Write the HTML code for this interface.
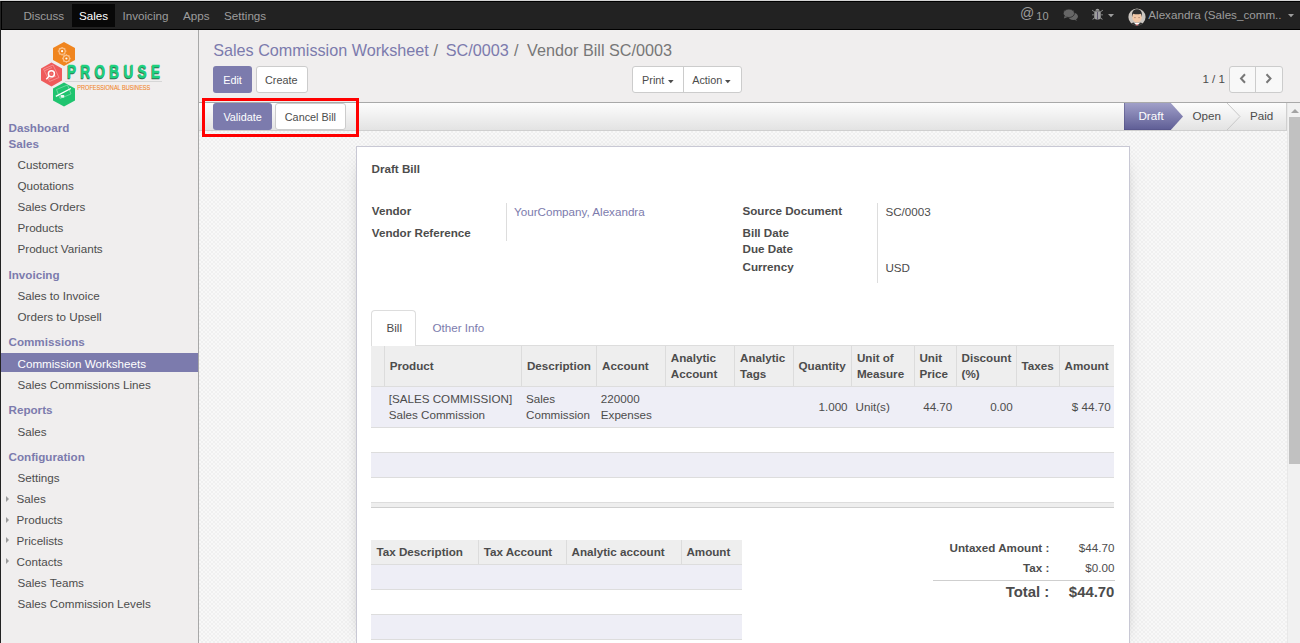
<!DOCTYPE html>
<html><head><meta charset="utf-8"><title>Vendor Bill SC/0003</title>
<style>
html,body{margin:0;padding:0;width:1300px;height:643px;overflow:hidden;background:#fff;}
body{position:relative;font-family:"Liberation Sans",sans-serif;}
.t{position:absolute;white-space:nowrap;}
.r{position:absolute;}
</style></head><body>
<div class="r" style="left:0px;top:0px;width:1300px;height:1px;background:#d4d4d4"></div>
<div class="r" style="left:0px;top:1px;width:1300px;height:29px;background:#000"></div>
<div class="r" style="left:2px;top:2px;width:1298px;height:27px;background:#222"></div>
<div class="r" style="left:0px;top:1px;width:1px;height:642px;background:#222"></div>
<div class="r" style="left:72px;top:4px;width:43px;height:23px;background:#080808"></div>
<div class="t" style="left:23.40px;top:8px;font-size:11.65px;line-height:16px;color:#9d9d9d;">Discuss</div>
<div class="t" style="left:78.90px;top:8px;font-size:11.65px;line-height:16px;color:#fff;">Sales</div>
<div class="t" style="left:122.50px;top:8px;font-size:11.65px;line-height:16px;color:#9d9d9d;">Invoicing</div>
<div class="t" style="left:183.00px;top:8px;font-size:11.65px;line-height:16px;color:#9d9d9d;">Apps</div>
<div class="t" style="left:224.10px;top:8px;font-size:11.65px;line-height:16px;color:#9d9d9d;">Settings</div>
<div class="t" style="left:1020.00px;top:4px;font-size:14px;line-height:18px;color:#9d9d9d;">@</div>
<div class="t" style="left:1036.30px;top:9px;font-size:11px;line-height:14px;color:#9d9d9d;">10</div>
<svg class="r" style="left:1063px;top:8.6px" width="16" height="13" viewBox="0 0 16 13"><ellipse cx="10.2" cy="7.4" rx="4.7" ry="3.6" fill="#666"/><path d="M12.6 10l1.7 1.8-3.4-1z" fill="#666"/><ellipse cx="5.9" cy="4.3" rx="5.6" ry="4.2" fill="#666" stroke="#222" stroke-width=".7"/><path d="M1.6 6.9L.9 9.5l3.6-1.4z" fill="#666"/></svg>
<svg class="r" style="left:1092px;top:8.4px" width="11" height="12" viewBox="0 0 11 12"><g fill="#9d9d9d"><path d="M3.4 2.8C3.6 1.4 4.4.7 5.5.7s1.9.7 2.1 2.1z"/><path d="M2.3 3.2h6.4l.1 6c0 1.2-.9 2.2-2.2 2.2H4.4c-1.3 0-2.2-1-2.2-2.2z"/><path d="M.3 1.8l2.3 1.7-.4.6L0 2.4zM10.7 1.8L8.4 3.5l.4.6L11 2.4zM0 6.4h2.3v.9H0zM8.7 6.4H11v.9H8.7zM.3 11.2l2-1.6.5.6-2 1.6zM10.7 11.2l-2-1.6-.5.6 2 1.6z"/></g><rect x="5.1" y="4" width=".8" height="7.2" fill="#4a4060"/></svg>
<svg class="r" style="left:1107.3px;top:13px" width="8" height="5.3" viewBox="0 0 8 5.3"><polygon points="1,1 7,1 4.0,4.3" fill="#9d9d9d"/></svg>
<svg class="r" style="left:1127.9px;top:8px" width="18" height="18" viewBox="0 0 18 18"><defs><clipPath id="av"><circle cx="9" cy="9" r="8.6"/></clipPath></defs><circle cx="9" cy="9" r="8.6" fill="#cbc6c0"/><g clip-path="url(#av)"><path d="M1 19c0-3.3 3-4.8 8-4.8s8 1.5 8 4.8z" fill="#303030"/><path d="M5.6 14.4h6.8L9 17.8z" fill="#fff"/><path d="M8.6 15.9h.8l.2 2h-1.2z" fill="#e02a2a"/><ellipse cx="9" cy="9.2" rx="4.7" ry="5.4" fill="#f1c7a6"/><path d="M4.1 9.2C3.4 3.6 5.4 1.2 9 1.2s5.6 2.4 4.9 8c-.2-1.7-.6-3-1.1-3.5-1.1.5-2.4.6-3.8.6s-2.7-.1-3.8-.6c-.5.5-.9 1.8-1.1 3.5z" fill="#2d2d2d"/><path d="M6 9.6h1.8M10.2 9.6H12" stroke="#a07e68" stroke-width=".7"/></g></svg>
<div class="t" style="left:1148.30px;top:7px;font-size:11.65px;line-height:16px;color:#9d9d9d;">Alexandra (Sales_comm..</div>
<svg class="r" style="left:1287.3px;top:13px" width="8" height="5.3" viewBox="0 0 8 5.3"><polygon points="1,1 7,1 4.0,4.3" fill="#9d9d9d"/></svg>
<div class="r" style="left:1px;top:30px;width:197px;height:613px;background:#f0eeee"></div>
<div class="r" style="left:198px;top:30px;width:1px;height:613px;background:#a8a8a8"></div>
<svg class="r" style="left:38px;top:40px" width="128" height="70" viewBox="0 0 128 70">
<polygon points="26,2 37,8 37,20 26,26 15,20 15,8" fill="#f0851f"/>
<polygon points="13.5,22.5 24,28.5 24,40.5 13.5,46.5 3,40.5 3,28.5" fill="#ef5b5b"/>
<polygon points="26,42.5 37,48.5 37,60.5 26,66.5 15,60.5 15,48.5" fill="#1fc46f"/>
<g fill="none" stroke="#f9c08a" stroke-width="1.1"><circle cx="24.1" cy="11.2" r="3.1"/><circle cx="28.4" cy="18.5" r="3.1"/></g>
<g stroke="#f9c08a" stroke-width="1.3"><path d="M24.1 6.9v1.4M24.1 14.1v1.4M19.8 11.2h1.4M27 11.2h1.4M21.1 8.2l1 1M26.1 13.2l1 1M21.1 14.2l1-1M26.1 9.2l1-1"/><path d="M28.4 14.2v1.4M28.4 21.4v1.4M24.1 18.5h1.4M31.3 18.5h1.4M25.4 15.5l1 1M30.4 20.5l1 1M25.4 21.5l1-1M30.4 16.5l1-1"/></g>
<circle cx="24.1" cy="11.2" r="1.1" fill="#fff"/><circle cx="28.4" cy="18.5" r="1.1" fill="#fff"/>
<g fill="none" stroke="#f59a9a" stroke-width=".8"><path d="M5.5 29l9.5-4 6 12.5-9.5 4z"/><path d="M7 30.5l7-3M11 39l7-3"/></g>
<g stroke="#fff" stroke-width="1.5" fill="none"><circle cx="13.4" cy="33.8" r="3"/><path d="M11.3 36l-3 3.3"/></g><circle cx="13.4" cy="33.8" r="1" fill="#f07a7a"/>
<g fill="none" stroke="#7fdcab" stroke-width=".8"><path d="M18.5 49.5l11-4.5 3.5 9-11 4.5z"/></g>
<path d="M17.8 56.3l15-7.8" stroke="#fff" stroke-width="1.4"/><rect x="22.6" y="55" width="3.6" height="2.6" fill="#fff" opacity=".9"/>
<g transform="translate(29.2,38.1) scale(1,1.32)"><text x="-0.5" y="0.7" style="font-family:'Liberation Sans';font-weight:bold;font-size:13.4px" fill="#2f6e50" stroke="#2f6e50" stroke-width="0.3" textLength="93" lengthAdjust="spacing">PROBUSE</text><text x="0" y="0" style="font-family:'Liberation Sans';font-weight:bold;font-size:13.4px" fill="#1ed27e" stroke="#1ed27e" stroke-width="0.2" textLength="93" lengthAdjust="spacing">PROBUSE</text></g>
<rect x="27" y="41" width="97" height="1" fill="#d6d6d6"/>
<text x="39.3" y="49.8" style="font-family:'Liberation Sans';font-size:7px" fill="#f0872a" stroke="#f0872a" stroke-width="0.1" textLength="73" lengthAdjust="spacingAndGlyphs">PROFESSIONAL BUSINESS</text>
</svg>
<div class="t" style="left:8.50px;top:120px;font-size:11.65px;line-height:16px;font-weight:bold;color:#7c7bad;">Dashboard</div>
<div class="t" style="left:8.50px;top:136px;font-size:11.65px;line-height:16px;font-weight:bold;color:#7c7bad;">Sales</div>
<div class="t" style="left:8.50px;top:267px;font-size:11.65px;line-height:16px;font-weight:bold;color:#7c7bad;">Invoicing</div>
<div class="t" style="left:8.50px;top:334px;font-size:11.65px;line-height:16px;font-weight:bold;color:#7c7bad;">Commissions</div>
<div class="t" style="left:8.50px;top:402px;font-size:11.65px;line-height:16px;font-weight:bold;color:#7c7bad;">Reports</div>
<div class="t" style="left:8.50px;top:449px;font-size:11.65px;line-height:16px;font-weight:bold;color:#7c7bad;">Configuration</div>
<div class="r" style="left:1px;top:353px;width:197px;height:19px;background:#7c7bad"></div>
<div class="t" style="left:17.50px;top:157px;font-size:11.65px;line-height:16px;color:#4c4c4c;">Customers</div>
<div class="t" style="left:17.50px;top:178px;font-size:11.65px;line-height:16px;color:#4c4c4c;">Quotations</div>
<div class="t" style="left:17.50px;top:199px;font-size:11.65px;line-height:16px;color:#4c4c4c;">Sales Orders</div>
<div class="t" style="left:17.50px;top:220px;font-size:11.65px;line-height:16px;color:#4c4c4c;">Products</div>
<div class="t" style="left:17.50px;top:241px;font-size:11.65px;line-height:16px;color:#4c4c4c;">Product Variants</div>
<div class="t" style="left:17.50px;top:288px;font-size:11.65px;line-height:16px;color:#4c4c4c;">Sales to Invoice</div>
<div class="t" style="left:17.50px;top:309px;font-size:11.65px;line-height:16px;color:#4c4c4c;">Orders to Upsell</div>
<div class="t" style="left:17.50px;top:356px;font-size:11.65px;line-height:16px;color:#fff;">Commission Worksheets</div>
<div class="t" style="left:17.50px;top:377px;font-size:11.65px;line-height:16px;color:#4c4c4c;">Sales Commissions Lines</div>
<div class="t" style="left:17.50px;top:424px;font-size:11.65px;line-height:16px;color:#4c4c4c;">Sales</div>
<div class="t" style="left:17.50px;top:470px;font-size:11.65px;line-height:16px;color:#4c4c4c;">Settings</div>
<div class="t" style="left:17.50px;top:575px;font-size:11.65px;line-height:16px;color:#4c4c4c;">Sales Teams</div>
<div class="t" style="left:17.50px;top:596px;font-size:11.65px;line-height:16px;color:#4c4c4c;">Sales Commission Levels</div>
<div class="t" style="left:16.60px;top:491px;font-size:11.65px;line-height:16px;color:#4c4c4c;">Sales</div>
<div class="r" style="left:5.8px;top:495.5px;width:0;height:0;border-top:3.2px solid transparent;border-bottom:3.2px solid transparent;border-left:3.3px solid #9a9a9a"></div>
<div class="t" style="left:16.60px;top:512px;font-size:11.65px;line-height:16px;color:#4c4c4c;">Products</div>
<div class="r" style="left:5.8px;top:516.5px;width:0;height:0;border-top:3.2px solid transparent;border-bottom:3.2px solid transparent;border-left:3.3px solid #9a9a9a"></div>
<div class="t" style="left:16.60px;top:533px;font-size:11.65px;line-height:16px;color:#4c4c4c;">Pricelists</div>
<div class="r" style="left:5.8px;top:537.4px;width:0;height:0;border-top:3.2px solid transparent;border-bottom:3.2px solid transparent;border-left:3.3px solid #9a9a9a"></div>
<div class="t" style="left:16.60px;top:554px;font-size:11.65px;line-height:16px;color:#4c4c4c;">Contacts</div>
<div class="r" style="left:5.8px;top:558.3px;width:0;height:0;border-top:3.2px solid transparent;border-bottom:3.2px solid transparent;border-left:3.3px solid #9a9a9a"></div>
<div class="r" style="left:199px;top:30px;width:1101px;height:72px;background:#f0eeee"></div>
<div class="t" style="left:213.20px;top:40px;font-size:16.2px;line-height:20px;color:#7c7bad;">Sales Commission Worksheet</div>
<div class="t" style="left:433.60px;top:40px;font-size:16.2px;line-height:20px;color:#777;">/</div>
<div class="t" style="left:445.80px;top:40px;font-size:16.2px;line-height:20px;color:#7c7bad;">SC/0003</div>
<div class="t" style="left:514.00px;top:40px;font-size:16.2px;line-height:20px;color:#777;">/</div>
<div class="t" style="left:527.10px;top:40px;font-size:16.2px;line-height:20px;color:#777;">Vendor Bill SC/0003</div>
<div class="r" style="left:213px;top:66px;width:39px;height:27px;background:#7c7bad;border-radius:3px;box-sizing:border-box"></div>
<div class="t" style="left:223.20px;top:73px;font-size:10.83px;line-height:14px;color:#fff;">Edit</div>
<div class="r" style="left:256px;top:66px;width:52px;height:27px;background:#fff;border:1px solid #ccc;border-radius:3px;box-sizing:border-box"></div>
<div class="t" style="left:265.00px;top:73px;font-size:10.83px;line-height:14px;color:#4c4c4c;">Create</div>
<div class="r" style="left:632px;top:66px;width:110px;height:27px;background:#fff;border:1px solid #ccc;border-radius:3px;box-sizing:border-box"></div>
<div class="r" style="left:683px;top:66px;width:1px;height:27px;background:#ccc"></div>
<div class="t" style="left:642.10px;top:73px;font-size:10.83px;line-height:14px;color:#4c4c4c;">Print</div>
<svg class="r" style="left:666.6px;top:78.7px" width="7.6" height="5.3" viewBox="0 0 7.6 5.3"><polygon points="1,1 6.6,1 3.8,4.3" fill="#4c4c4c"/></svg>
<div class="t" style="left:692.20px;top:73px;font-size:10.83px;line-height:14px;color:#4c4c4c;">Action</div>
<svg class="r" style="left:724.3px;top:78.7px" width="7.6" height="5.3" viewBox="0 0 7.6 5.3"><polygon points="1,1 6.6,1 3.8,4.3" fill="#4c4c4c"/></svg>
<div class="t" style="left:1202.40px;top:71px;font-size:11.65px;line-height:16px;color:#4c4c4c;">1 / 1</div>
<div class="r" style="left:1229px;top:66px;width:54px;height:27px;background:#f8f8f8;border:1px solid #ccc;border-radius:3px;box-sizing:border-box"></div>
<div class="r" style="left:1255px;top:66px;width:1px;height:27px;background:#ccc"></div>
<svg class="r" style="left:1238px;top:73px" width="10" height="11" viewBox="0 0 10 11"><path d="M7 1.2L3 5.5l4 4.3" stroke="#777" stroke-width="2" fill="none"/></svg>
<svg class="r" style="left:1263.8px;top:73px" width="10" height="11" viewBox="0 0 10 11"><path d="M2.5 1.2l4 4.3-4 4.3" stroke="#777" stroke-width="2" fill="none"/></svg>
<div class="r" style="left:199px;top:102px;width:1101px;height:1px;background:#a9a9a9"></div>
<div class="r" style="left:199px;top:103px;width:1088px;height:27px;background:linear-gradient(#fdfdfd,#e3e3e3)"></div>
<div class="r" style="left:199px;top:130px;width:1088px;height:1px;background:#cfcfcf"></div>
<div class="r" style="left:1286px;top:103px;width:1px;height:28px;background:#d0d0d0"></div>
<div class="r" style="left:213px;top:103px;width:59px;height:27px;background:#7c7bad;border-radius:3px"></div>
<div class="t" style="left:223.40px;top:110px;font-size:10.83px;line-height:14px;color:#fff;">Validate</div>
<div class="r" style="left:275px;top:103px;width:71px;height:27px;background:#fff;border:1px solid #ccc;border-radius:3px;box-sizing:border-box"></div>
<div class="t" style="left:284.80px;top:110px;font-size:10.83px;line-height:14px;color:#4c4c4c;">Cancel Bill</div>
<svg class="r" style="left:1123px;top:103px" width="164" height="27" viewBox="0 0 164 27">
<defs><linearGradient id="dg" x1="0" y1="0" x2="0" y2="1"><stop offset="0" stop-color="#a09fc8"/><stop offset="1" stop-color="#5e5d95"/></linearGradient></defs>
<polygon points="1,0 47.8,0 60,13.5 47.8,27 1,27" fill="url(#dg)"/><rect x="1" y="0" width="1" height="27" fill="#4f4d80" opacity=".5"/><rect x="1" y="26" width="47" height="1" fill="#4f4d80" opacity=".4"/>
<polyline points="104,0 117,13.5 104,27" fill="none" stroke="#c8c8c8" stroke-width="1"/>
</svg>
<div class="t" style="left:1138.40px;top:108px;font-size:11.65px;line-height:16px;color:#fff;">Draft</div>
<div class="t" style="left:1192.50px;top:108px;font-size:11.65px;line-height:16px;color:#4c4c4c;">Open</div>
<div class="t" style="left:1249.90px;top:108px;font-size:11.65px;line-height:16px;color:#4c4c4c;">Paid</div>
<div class="r" style="left:199px;top:131px;width:1088px;height:512px;background-color:#f4f4f4;background-image:repeating-conic-gradient(#f8f8f8 0 25%,#f0f0f0 0 50%);background-size:4px 4px"></div>
<div class="r" style="left:1287px;top:103px;width:13px;height:540px;background:#f1f1f1;border-left:1px solid #e8e8e8;box-sizing:border-box"></div>
<div class="r" style="left:1289px;top:117px;width:11px;height:347px;background:#c1c1c1"></div>
<div class="r" style="left:1290.5px;top:108.5px;width:0;height:0;border-left:4px solid transparent;border-right:4px solid transparent;border-bottom:4.5px solid #a3a3a3"></div>
<div class="r" style="left:202px;top:98px;width:157px;height:39px;border:3px solid #ff0000;box-sizing:border-box"></div>
<div class="r" style="left:356px;top:146px;width:774px;height:497px;background:#fff;border:1px solid #c8c8d4;border-bottom:none;box-sizing:border-box;box-shadow:0 5px 20px -15px #000"></div>
<div class="t" style="left:371.50px;top:161px;font-size:11.65px;line-height:16px;font-weight:bold;color:#4c4c4c;">Draft Bill</div>
<div class="t" style="left:371.80px;top:203px;font-size:11.65px;line-height:16px;font-weight:bold;color:#4c4c4c;">Vendor</div>
<div class="t" style="left:371.80px;top:225px;font-size:11.65px;line-height:16px;font-weight:bold;color:#4c4c4c;">Vendor Reference</div>
<div class="r" style="left:506px;top:203px;width:1px;height:38px;background:#ddd"></div>
<div class="t" style="left:514.00px;top:204px;font-size:11.65px;line-height:16px;color:#7c7bad;">YourCompany, Alexandra</div>
<div class="t" style="left:742.50px;top:203px;font-size:11.65px;line-height:16px;font-weight:bold;color:#4c4c4c;">Source Document</div>
<div class="t" style="left:742.50px;top:225px;font-size:11.65px;line-height:16px;font-weight:bold;color:#4c4c4c;">Bill Date</div>
<div class="t" style="left:742.50px;top:241px;font-size:11.65px;line-height:16px;font-weight:bold;color:#4c4c4c;">Due Date</div>
<div class="t" style="left:742.50px;top:259px;font-size:11.65px;line-height:16px;font-weight:bold;color:#4c4c4c;">Currency</div>
<div class="r" style="left:877px;top:203px;width:1px;height:80px;background:#ddd"></div>
<div class="t" style="left:885.40px;top:204px;font-size:11.65px;line-height:16px;color:#4c4c4c;">SC/0003</div>
<div class="t" style="left:885.40px;top:260px;font-size:11.65px;line-height:16px;color:#4c4c4c;">USD</div>
<div class="r" style="left:371px;top:345px;width:743px;height:1px;background:#ddd"></div>
<div class="r" style="left:371px;top:310px;width:45px;height:36px;background:#fff;border:1px solid #ddd;border-bottom:none;border-radius:4px 4px 0 0;box-sizing:border-box"></div>
<div class="t" style="left:386.50px;top:320px;font-size:11.65px;line-height:16px;color:#4c4c4c;">Bill</div>
<div class="t" style="left:432.50px;top:320px;font-size:11.65px;line-height:16px;color:#7c7bad;">Other Info</div>
<div class="r" style="left:371px;top:346px;width:743px;height:40px;background:#eeeeee"></div>
<div class="r" style="left:371px;top:386px;width:743px;height:1px;background:#ddd"></div>
<div class="r" style="left:384px;top:346px;width:1px;height:40px;background:#dcdcdc"></div>
<div class="r" style="left:521px;top:346px;width:1px;height:40px;background:#dcdcdc"></div>
<div class="r" style="left:596px;top:346px;width:1px;height:40px;background:#dcdcdc"></div>
<div class="r" style="left:665px;top:346px;width:1px;height:40px;background:#dcdcdc"></div>
<div class="r" style="left:734px;top:346px;width:1px;height:40px;background:#dcdcdc"></div>
<div class="r" style="left:793px;top:346px;width:1px;height:40px;background:#dcdcdc"></div>
<div class="r" style="left:851px;top:346px;width:1px;height:40px;background:#dcdcdc"></div>
<div class="r" style="left:914px;top:346px;width:1px;height:40px;background:#dcdcdc"></div>
<div class="r" style="left:956px;top:346px;width:1px;height:40px;background:#dcdcdc"></div>
<div class="r" style="left:1016px;top:346px;width:1px;height:40px;background:#dcdcdc"></div>
<div class="r" style="left:1059px;top:346px;width:1px;height:40px;background:#dcdcdc"></div>
<div class="r" style="left:371px;top:387px;width:743px;height:40px;background:#eeeef6"></div>
<div class="r" style="left:371px;top:427px;width:743px;height:1px;background:#ddd"></div>
<div class="r" style="left:371px;top:452px;width:743px;height:1px;background:#ddd"></div>
<div class="r" style="left:371px;top:453px;width:743px;height:24px;background:#eeeef6"></div>
<div class="r" style="left:371px;top:477px;width:743px;height:1px;background:#ddd"></div>
<div class="r" style="left:371px;top:502px;width:743px;height:1px;background:#ddd"></div>
<div class="r" style="left:371px;top:503px;width:743px;height:4px;background:#eeeeee"></div>
<div class="r" style="left:371px;top:507px;width:743px;height:1px;background:#cfcfcf"></div>
<div class="t" style="left:389.70px;top:358px;font-size:11.65px;line-height:16px;font-weight:bold;color:#4c4c4c;">Product</div>
<div class="t" style="left:526.90px;top:358px;font-size:11.65px;line-height:16px;font-weight:bold;color:#4c4c4c;">Description</div>
<div class="t" style="left:602.10px;top:358px;font-size:11.65px;line-height:16px;font-weight:bold;color:#4c4c4c;">Account</div>
<div class="t" style="left:670.80px;top:350px;font-size:11.65px;line-height:16px;font-weight:bold;color:#4c4c4c;">Analytic<br>Account</div>
<div class="t" style="left:740.00px;top:350px;font-size:11.65px;line-height:16px;font-weight:bold;color:#4c4c4c;">Analytic<br>Tags</div>
<div class="t" style="left:798.50px;top:358px;font-size:11.65px;line-height:16px;font-weight:bold;color:#4c4c4c;">Quantity</div>
<div class="t" style="left:856.90px;top:350px;font-size:11.65px;line-height:16px;font-weight:bold;color:#4c4c4c;">Unit of<br>Measure</div>
<div class="t" style="left:919.40px;top:350px;font-size:11.65px;line-height:16px;font-weight:bold;color:#4c4c4c;">Unit<br>Price</div>
<div class="t" style="left:961.50px;top:350px;font-size:11.65px;line-height:16px;font-weight:bold;color:#4c4c4c;">Discount<br>(%)</div>
<div class="t" style="left:1021.50px;top:358px;font-size:11.65px;line-height:16px;font-weight:bold;color:#4c4c4c;">Taxes</div>
<div class="t" style="left:1064.60px;top:358px;font-size:11.65px;line-height:16px;font-weight:bold;color:#4c4c4c;">Amount</div>
<div class="t" style="left:388.70px;top:391px;font-size:11.65px;line-height:16px;color:#4c4c4c;">[SALES COMMISSION]<br>Sales Commission</div>
<div class="t" style="left:526.00px;top:391px;font-size:11.65px;line-height:16px;color:#4c4c4c;">Sales<br>Commission</div>
<div class="t" style="left:600.80px;top:391px;font-size:11.65px;line-height:16px;color:#4c4c4c;">220000<br>Expenses</div>
<div class="t" style="left:547.60px;top:399px;font-size:11.65px;line-height:16px;color:#4c4c4c;width:300px;text-align:right;">1.000</div>
<div class="t" style="left:855.50px;top:399px;font-size:11.65px;line-height:16px;color:#4c4c4c;">Unit(s)</div>
<div class="t" style="left:652.30px;top:399px;font-size:11.65px;line-height:16px;color:#4c4c4c;width:300px;text-align:right;">44.70</div>
<div class="t" style="left:712.80px;top:399px;font-size:11.65px;line-height:16px;color:#4c4c4c;width:300px;text-align:right;">0.00</div>
<div class="t" style="left:810.70px;top:399px;font-size:11.65px;line-height:16px;color:#4c4c4c;width:300px;text-align:right;">$ 44.70</div>
<div class="r" style="left:371px;top:540px;width:371px;height:24px;background:#eeeeee"></div>
<div class="r" style="left:371px;top:564px;width:371px;height:1px;background:#ddd"></div>
<div class="r" style="left:478px;top:540px;width:1px;height:24px;background:#dcdcdc"></div>
<div class="r" style="left:566px;top:540px;width:1px;height:24px;background:#dcdcdc"></div>
<div class="r" style="left:681px;top:540px;width:1px;height:24px;background:#dcdcdc"></div>
<div class="r" style="left:371px;top:565px;width:371px;height:24px;background:#eeeef6"></div>
<div class="r" style="left:371px;top:589px;width:371px;height:1px;background:#ddd"></div>
<div class="r" style="left:371px;top:614px;width:371px;height:1px;background:#ddd"></div>
<div class="r" style="left:371px;top:615px;width:371px;height:24px;background:#eeeef6"></div>
<div class="r" style="left:371px;top:639px;width:371px;height:1px;background:#ddd"></div>
<div class="t" style="left:376.50px;top:544px;font-size:11.65px;line-height:16px;font-weight:bold;color:#4c4c4c;">Tax Description</div>
<div class="t" style="left:483.70px;top:544px;font-size:11.65px;line-height:16px;font-weight:bold;color:#4c4c4c;">Tax Account</div>
<div class="t" style="left:571.50px;top:544px;font-size:11.65px;line-height:16px;font-weight:bold;color:#4c4c4c;">Analytic account</div>
<div class="t" style="left:686.40px;top:544px;font-size:11.65px;line-height:16px;font-weight:bold;color:#4c4c4c;">Amount</div>
<div class="t" style="left:749.30px;top:540px;font-size:11.65px;line-height:16px;font-weight:bold;color:#4c4c4c;width:300px;text-align:right;">Untaxed Amount :</div>
<div class="t" style="left:814.40px;top:540px;font-size:11.65px;line-height:16px;color:#4c4c4c;width:300px;text-align:right;">$44.70</div>
<div class="t" style="left:749.30px;top:560px;font-size:11.65px;line-height:16px;font-weight:bold;color:#4c4c4c;width:300px;text-align:right;">Tax :</div>
<div class="t" style="left:814.40px;top:560px;font-size:11.65px;line-height:16px;color:#4c4c4c;width:300px;text-align:right;">$0.00</div>
<div class="r" style="left:933px;top:580px;width:182px;height:1px;background:#cfcfcf"></div>
<div class="t" style="left:749.30px;top:583px;font-size:14.9px;line-height:19px;font-weight:bold;color:#4c4c4c;width:300px;text-align:right;">Total :</div>
<div class="t" style="left:814.40px;top:583px;font-size:14.9px;line-height:19px;font-weight:bold;color:#4c4c4c;width:300px;text-align:right;">$44.70</div>
</body></html>
